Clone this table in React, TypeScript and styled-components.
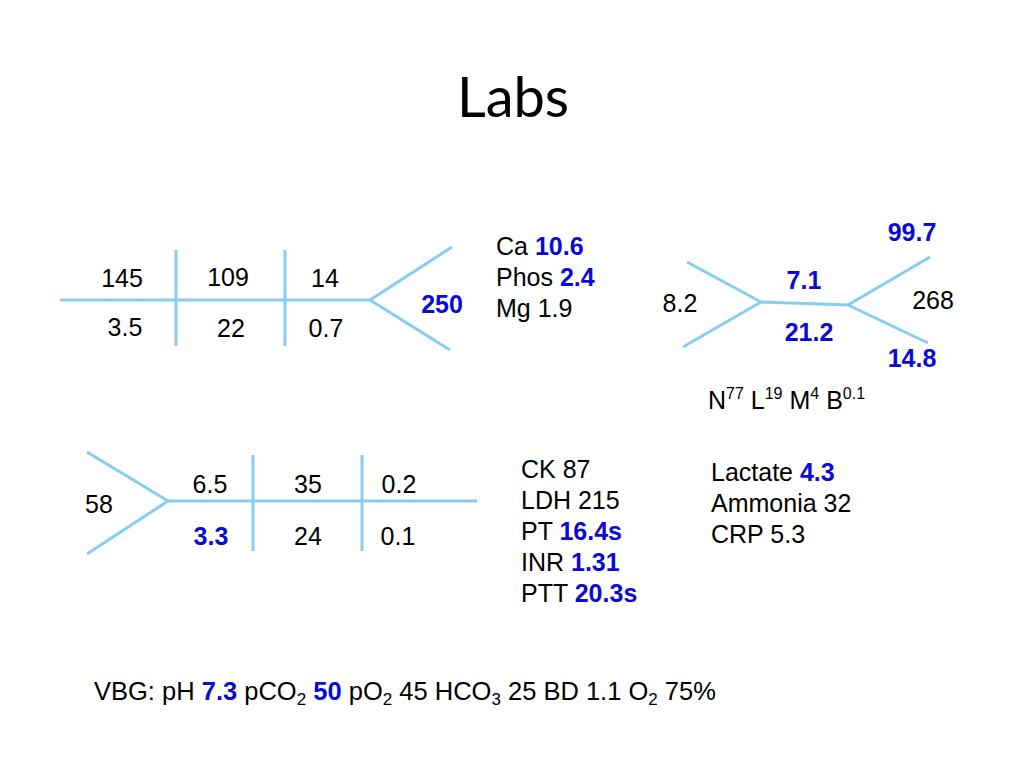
import React from "react";
import styled, { createGlobalStyle } from "styled-components";

const GlobalStyle = createGlobalStyle`
  html, body { margin: 0; padding: 0; background: #ffffff; }
  body { font-family: "Liberation Sans", Arial, sans-serif; color: #000; }
`;

const LINE = "#86cdf1";
const BLUE = "#0a0ad6";

const Slide = styled.div`
  width: 1024px;
  height: 768px;
  display: flex;
  flex-direction: column;
  background: #fff;
  overflow: hidden;
`;

const Title = styled.h1`
  margin: 62px 0 0 0;
  height: 67px;
  font-family: Lato, "Open Sans", sans-serif;
  font-weight: 400;
  font-size: 56px;
  line-height: 67px;
  text-align: center;
  padding-left: 2px;
`;

const Row = styled.div<{ $top: number; $height: number }>`
  display: flex;
  align-items: flex-start;
  margin-top: ${(p) => p.$top}px;
  height: ${(p) => p.$height}px;
`;

const Diagram = styled.div<{ $w: number; $h: number; $ml: number; $mt: number }>`
  position: relative;
  flex: none;
  width: ${(p) => p.$w}px;
  height: ${(p) => p.$h}px;
  margin-left: ${(p) => p.$ml}px;
  margin-top: ${(p) => p.$mt}px;
`;

const Bones = styled.svg`
  position: absolute;
  inset: 0;
  overflow: visible;
`;

const Value = styled.span<{ $x: number; $y: number; $hi?: boolean }>`
  position: absolute;
  left: ${(p) => p.$x}px;
  top: ${(p) => p.$y}px;
  transform: translate(-50%, -50%);
  font-size: 25px;
  line-height: 1;
  white-space: nowrap;
  font-weight: ${(p) => (p.$hi ? 700 : 400)};
  color: ${(p) => (p.$hi ? BLUE : "#000")};
`;

const List = styled.div<{ $ml: number; $mt: number; $w?: number }>`
  flex: none;
  margin-left: ${(p) => p.$ml}px;
  margin-top: ${(p) => p.$mt}px;
  width: ${(p) => (p.$w ? `${p.$w}px` : "auto")};
  display: flex;
  flex-direction: column;
  font-size: 25px;
  line-height: 31px;
`;

const Item = styled.div`
  white-space: nowrap;
`;

const Hi = styled.b`
  color: ${BLUE};
  font-weight: 700;
`;

const Column = styled.div<{ $w: number }>`
  flex: none;
  width: ${(p) => p.$w}px;
  display: flex;
  flex-direction: column;
`;

const Diff = styled.div`
  margin: 10px 0 0 48px;
  font-size: 25px;
  line-height: 31px;
  white-space: nowrap;
`;

const Sup = styled.sup`
  font-size: 16px;
  line-height: 0;
  vertical-align: 0;
  position: relative;
  top: -10px;
`;

const Sub = styled.sub`
  font-size: 17px;
  line-height: 0;
  vertical-align: 0;
  position: relative;
  top: 5px;
`;

const Gas = styled.div`
  margin: 66px 0 0 94px;
  font-size: 25.5px;
  line-height: 31px;
  white-space: nowrap;
`;

type Seg = [number, number, number, number];
type Lab = { x: number; y: number; t: string; hi?: boolean };

const Fishbone: React.FC<{
  w: number;
  h: number;
  ml: number;
  mt: number;
  segs: Seg[];
  labels: Lab[];
}> = ({ w, h, ml, mt, segs, labels }) => (
  <Diagram $w={w} $h={h} $ml={ml} $mt={mt}>
    <Bones width={w} height={h} viewBox={`0 0 ${w} ${h}`}>
      {segs.map(([x1, y1, x2, y2], i) => (
        <line
          key={i}
          x1={x1}
          y1={y1}
          x2={x2}
          y2={y2}
          stroke={LINE}
          strokeWidth={3}
          strokeLinecap="butt"
        />
      ))}
    </Bones>
    {labels.map((l, i) => (
      <Value key={i} $x={l.x} $y={l.y} $hi={l.hi}>
        {l.t}
      </Value>
    ))}
  </Diagram>
);

const bmpSegs: Seg[] = [
  [4, 60, 314, 60],
  [120, 10, 120, 106],
  [229, 10, 229, 106],
  [314, 60, 396, 7],
  [314, 60, 394, 110],
];
const bmpLabels: Lab[] = [
  { x: 66, y: 38, t: "145" },
  { x: 69, y: 87, t: "3.5" },
  { x: 172, y: 37, t: "109" },
  { x: 175, y: 88, t: "22" },
  { x: 269, y: 38, t: "14" },
  { x: 270, y: 88, t: "0.7" },
  { x: 386, y: 64, t: "250", hi: true },
];

const cbcSegs: Seg[] = [
  [27, 47, 101, 87],
  [23, 132, 101, 87],
  [101, 87, 188, 90],
  [188, 90, 270, 42],
  [188, 90, 268, 128],
];
const cbcLabels: Lab[] = [
  { x: 20, y: 88, t: "8.2" },
  { x: 144, y: 65, t: "7.1", hi: true },
  { x: 149, y: 117, t: "21.2", hi: true },
  { x: 252, y: 17, t: "99.7", hi: true },
  { x: 273, y: 85, t: "268" },
  { x: 252, y: 143, t: "14.8", hi: true },
];

const hepSegs: Seg[] = [
  [2, 2, 83, 51],
  [2, 104, 83, 51],
  [83, 51, 392, 51],
  [168, 5, 168, 101],
  [277, 5, 277, 101],
];
const hepLabels: Lab[] = [
  { x: 14, y: 54, t: "58" },
  { x: 125, y: 34, t: "6.5" },
  { x: 126, y: 86, t: "3.3", hi: true },
  { x: 223, y: 34, t: "35" },
  { x: 223, y: 86, t: "24" },
  { x: 314, y: 34, t: "0.2" },
  { x: 313, y: 86, t: "0.1" },
];

export default function App() {
  return (
    <>
      <GlobalStyle />
      <Slide>
        <Title>Labs</Title>
        <Row $top={86} $height={235}>
          <Fishbone w={412} h={115} ml={56} mt={25} segs={bmpSegs} labels={bmpLabels} />
          <List $ml={28} $mt={16} $w={164}>
            <Item>
              Ca <Hi>10.6</Hi>
            </Item>
            <Item>
              Phos <Hi>2.4</Hi>
            </Item>
            <Item>Mg 1.9</Item>
          </List>
          <Column $w={364}>
            <Fishbone w={300} h={160} ml={0} mt={0} segs={cbcSegs} labels={cbcLabels} />
            <Diff>
              N<Sup>77</Sup> L<Sup>19</Sup> M<Sup>4</Sup> B<Sup>0.1</Sup>
            </Diff>
          </Column>
        </Row>
        <Row $top={0} $height={160}>
          <Fishbone w={400} h={110} ml={85} mt={0} segs={hepSegs} labels={hepLabels} />
          <List $ml={36} $mt={4} $w={190}>
            <Item>CK 87</Item>
            <Item>LDH 215</Item>
            <Item>
              PT <Hi>16.4s</Hi>
            </Item>
            <Item>
              INR <Hi>1.31</Hi>
            </Item>
            <Item>
              PTT <Hi>20.3s</Hi>
            </Item>
          </List>
          <List $ml={0} $mt={7}>
            <Item>
              Lactate <Hi>4.3</Hi>
            </Item>
            <Item>Ammonia 32</Item>
            <Item>CRP 5.3</Item>
          </List>
        </Row>
        <Gas>
          VBG: pH <Hi>7.3</Hi> pCO<Sub>2</Sub> <Hi>50</Hi> pO<Sub>2</Sub> 45 HCO<Sub>3</Sub> 25 BD 1.1 O
          <Sub>2</Sub> 75%
        </Gas>
      </Slide>
    </>
  );
}
